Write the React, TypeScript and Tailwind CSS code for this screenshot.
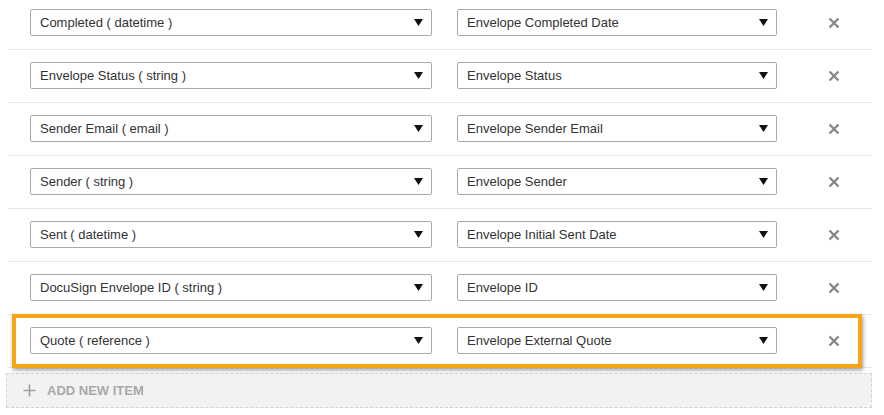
import React from "react";

const rows: [string, string][] = [
  ["Completed ( datetime )", "Envelope Completed Date"],
  ["Envelope Status ( string )", "Envelope Status"],
  ["Sender Email ( email )", "Envelope Sender Email"],
  ["Sender ( string )", "Envelope Sender"],
  ["Sent ( datetime )", "Envelope Initial Sent Date"],
  ["DocuSign Envelope ID ( string )", "Envelope ID"],
  ["Quote ( reference )", "Envelope External Quote"],
];

function Select({ label, width }: { label: string; width: string }) {
  return (
    <div
      className={`${width} h-[27px] flex items-center justify-between border border-[#a9a9a9] rounded-[2px] bg-white pl-[9px] pr-[8px] text-[13px] text-[#333]`}
    >
      <span>{label}</span>
      <svg width="9" height="7" viewBox="0 0 9 7">
        <path d="M0 0 H9 L4.5 7 Z" fill="#111" />
      </svg>
    </div>
  );
}

export default function App() {
  return (
    <div
      className="w-[884px] h-[415px] bg-white overflow-hidden"
      style={{ fontFamily: '"Liberation Sans", Arial, sans-serif' }}
    >
      <div className="ml-[8px] w-[864px] mt-[-3px]">
        {rows.map(([a, b], i) => (
          <div
            key={i}
            className="relative flex items-center border-b border-[#e6e6e6] pt-[12px] pb-[13px] pl-[22px]"
          >
            <Select label={a} width="w-[402px]" />
            <div className="w-[25px]" />
            <Select label={b} width="w-[320px]" />
            <div className="ml-[51px]">
              <svg width="12" height="12" viewBox="0 0 12 12" className="block">
                <path d="M1.5 1.5 L10.5 10.5 M10.5 1.5 L1.5 10.5" stroke="#888" strokeWidth="2.4" />
              </svg>
            </div>
            {i === rows.length - 1 && (
              <div className="absolute left-[4px] right-[10px] top-[-1px] bottom-[-1px] border-[4px] border-[#f7a518] shadow-[1px_2px_4px_rgba(0,0,0,0.4)] pointer-events-none" />
            )}
          </div>
        ))}
        <div className="mt-[5px] ml-[-2px] w-[866px] h-[35px] bg-[#f2f2f2] border border-dashed border-[#d4d4d4] flex items-center pl-[16px]">
          <svg width="13" height="13" viewBox="0 0 13 13">
            <path d="M6.5 0.5 V12.5 M0.5 6.5 H12.5" stroke="#a0a0a0" strokeWidth="1.6" />
          </svg>
          <span className="ml-[11px] text-[13px] font-bold text-[#a9a9a9]">ADD NEW ITEM</span>
        </div>
      </div>
    </div>
  );
}
